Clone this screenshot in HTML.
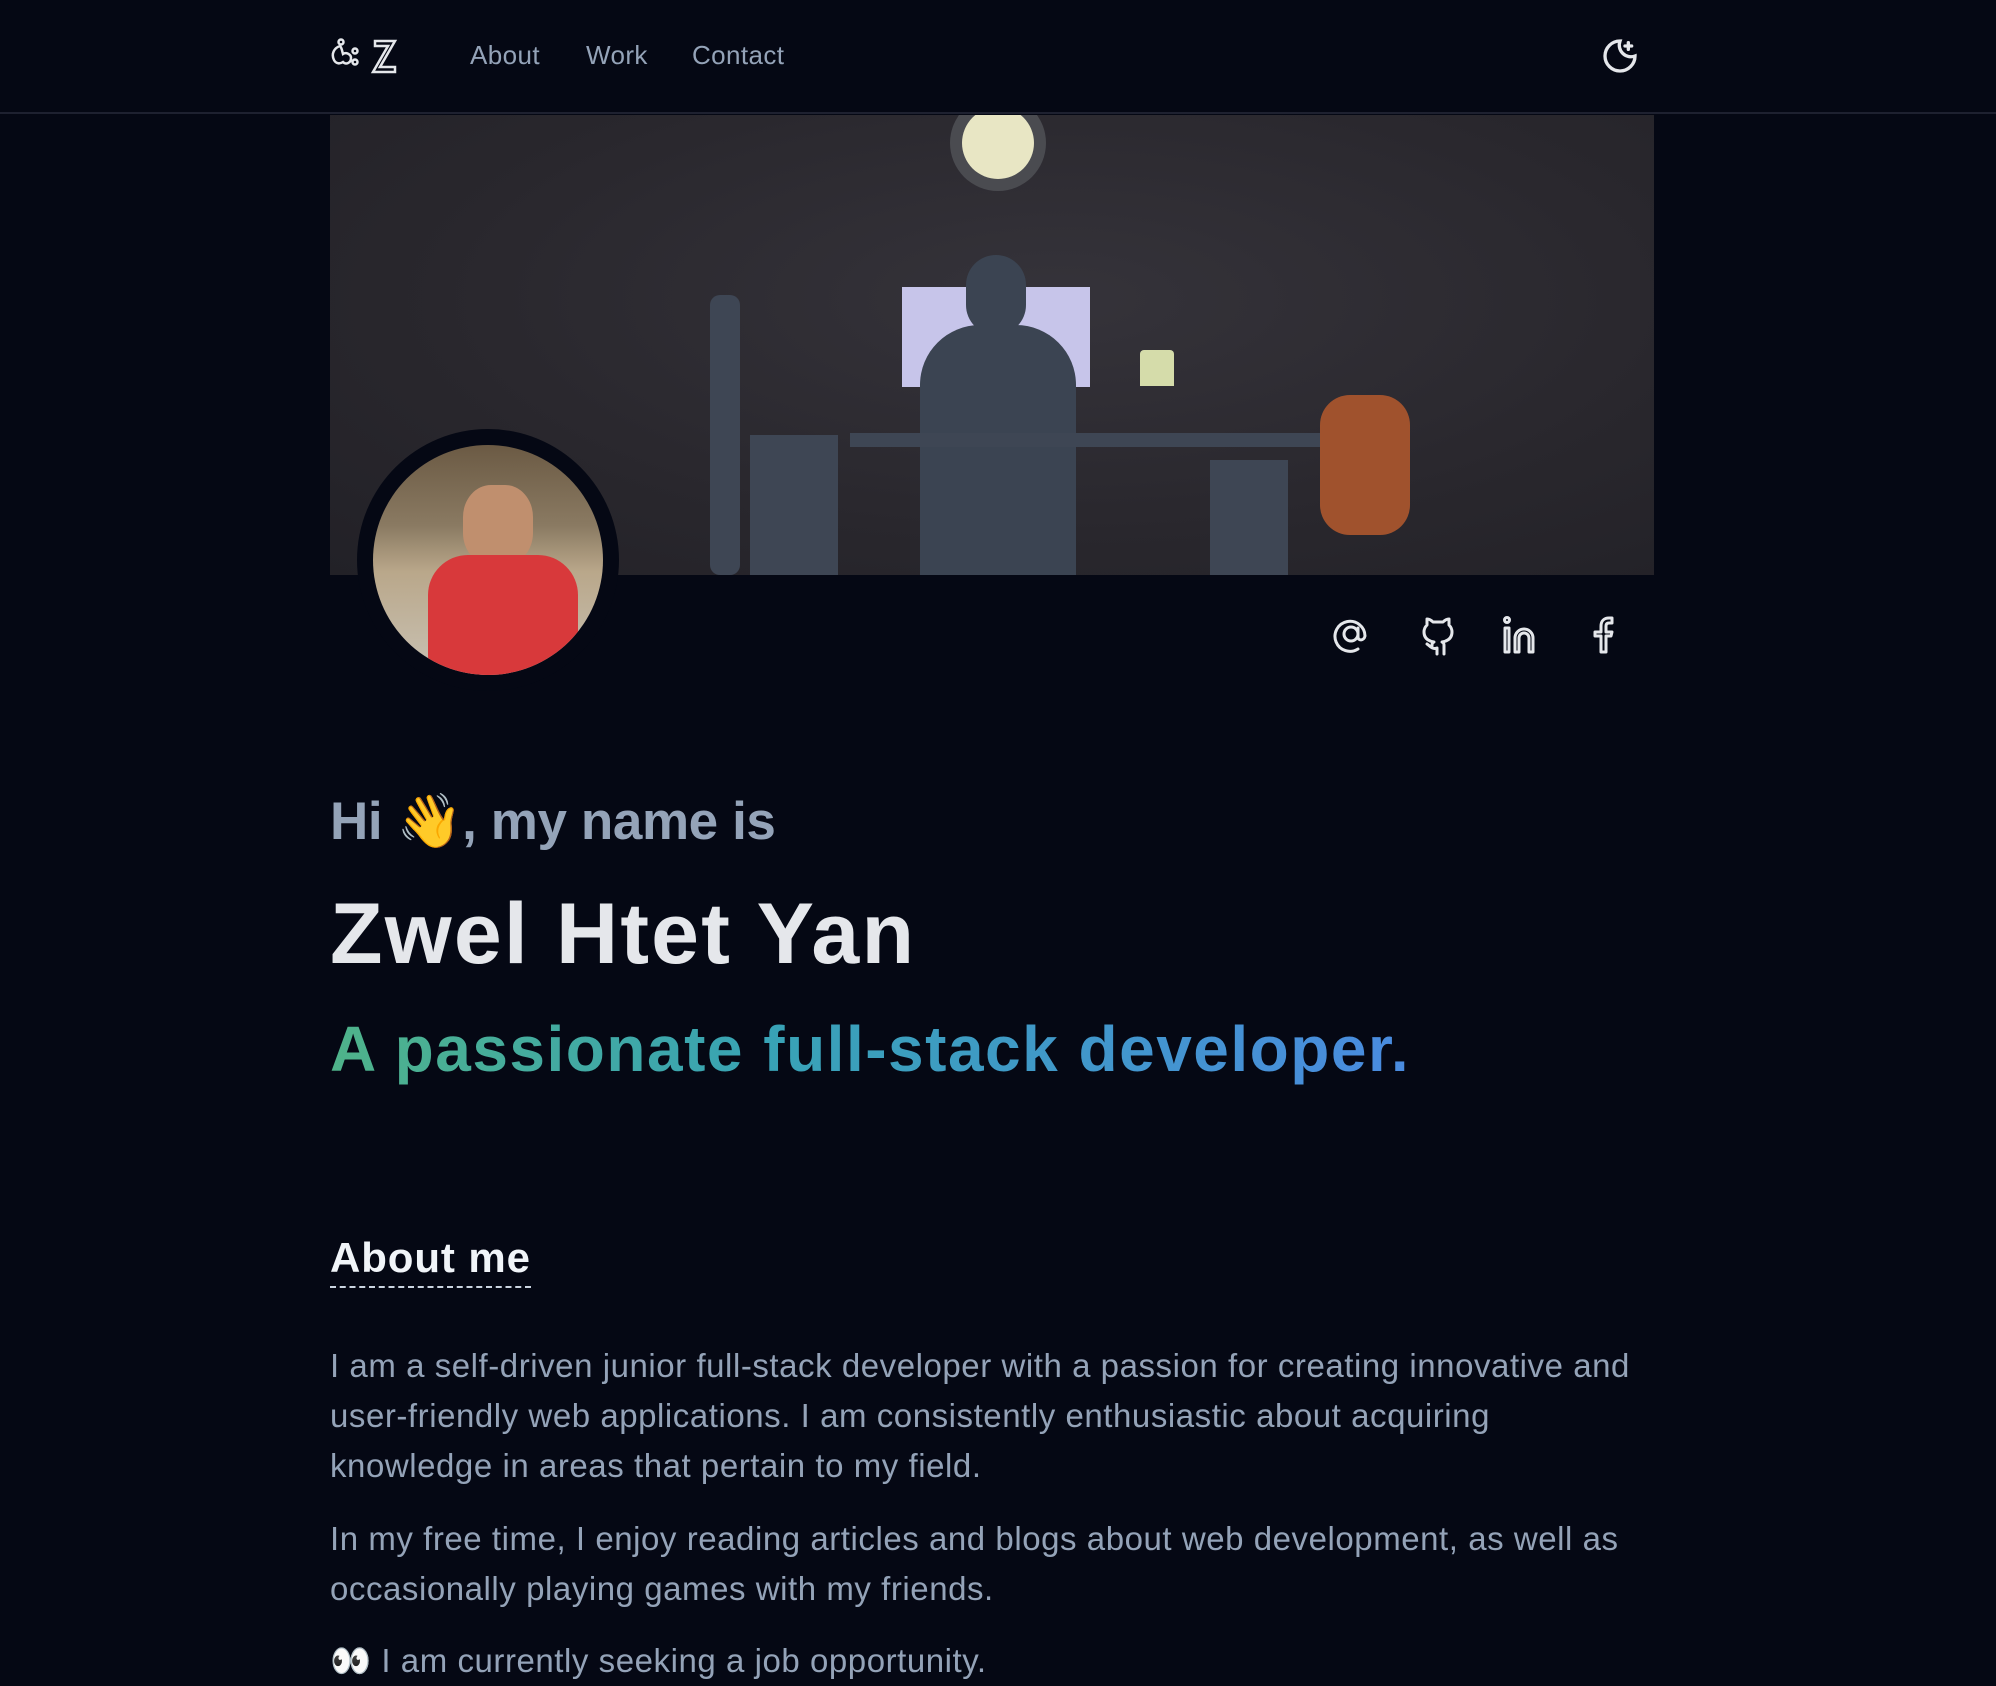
<!DOCTYPE html>
<html><head><meta charset="utf-8"><style>
*{margin:0;padding:0;box-sizing:border-box}
body{width:1996px;height:1686px;overflow:hidden;background:#050814;font-family:"Liberation Sans","DejaVu Sans",sans-serif;color:#e5e7eb}
.nav{height:114px;border-bottom:2px solid #1e2130;position:relative}
.nav a{position:absolute;top:40px;font-size:26px;color:#94a3b8;text-decoration:none;letter-spacing:0.4px}
.banner{position:absolute;left:330px;top:115px;width:1324px;height:460px;background:radial-gradient(ellipse at 55% 40%,#35333a,#29272d 60%,#222127);overflow:hidden}
.avatar{position:absolute;left:357px;top:429px;width:262px;height:262px;border-radius:50%;background:#050814}
.avatar div{position:absolute;left:16px;top:16px;width:230px;height:230px;border-radius:50%;background:linear-gradient(180deg,#6b5a44 0%,#8a7a62 35%,#b9a78a 55%,#c9c2b4 100%);overflow:hidden}
.t{position:absolute;left:330px;white-space:nowrap}
p.t{font-size:33px;letter-spacing:0.55px;color:#94a3b8;line-height:50px}
</style></head><body>
<div class="nav">
<svg style="position:absolute;left:330px;top:36px" width="70" height="40" viewBox="0 0 70 40" fill="none" stroke="#e5e7eb" stroke-width="2.5"><path d="M10 10c-6 2-9 8-6 14 2 4 6 4 9 2 3 3 8 1 8-4 0-4-5-6-8-4-1-3-1-6-3-8z"/><circle cx="11" cy="6" r="2.5"/><circle cx="25" cy="15" r="2.5"/><circle cx="25" cy="26" r="2.5"/><path d="M45 5h20l-15 26h15v5H43l15-26H45z"/></svg>
<a style="left:470px">About</a><a style="left:586px">Work</a><a style="left:692px">Contact</a>
<svg style="position:absolute;left:1600px;top:36px" width="40" height="40" viewBox="0 0 24 24" fill="none" stroke="#e5e7eb" stroke-width="2" stroke-linecap="round"><path d="M12 3a7 7 0 0 0 9 9 9 9 0 1 1-9-9z"/><path d="M17 4v4M15 6h4"/></svg>
</div>
<div class="banner">
<div style="position:absolute;left:620px;top:-20px;width:96px;height:96px;border-radius:50%;background:#4a4b50"></div>
<div style="position:absolute;left:632px;top:-8px;width:72px;height:72px;border-radius:50%;background:#e8e6c4"></div>
<div style="position:absolute;left:572px;top:172px;width:188px;height:100px;background:#c7c5ea"></div>
<div style="position:absolute;left:636px;top:140px;width:60px;height:80px;border-radius:30px;background:#3b4452"></div>
<div style="position:absolute;left:590px;top:210px;width:156px;height:250px;border-radius:60px 60px 0 0;background:#3b4452"></div>
<div style="position:absolute;left:520px;top:318px;width:470px;height:14px;background:#3e4654"></div>
<div style="position:absolute;left:420px;top:320px;width:88px;height:140px;background:#3e4654"></div>
<div style="position:absolute;left:880px;top:345px;width:78px;height:115px;background:#3e4654"></div>
<div style="position:absolute;left:380px;top:180px;width:30px;height:280px;background:#3e4654;border-radius:10px"></div>
<div style="position:absolute;left:810px;top:235px;width:34px;height:36px;background:#d5dcaa;border-radius:4px 4px 0 0"></div>
<div style="position:absolute;left:990px;top:280px;width:90px;height:140px;background:#a0522d;border-radius:30px"></div>
</div>
<div class="avatar"><div><div style="position:absolute;left:90px;top:40px;width:70px;height:80px;border-radius:40%;background:#c08f6e"></div><div style="position:absolute;left:55px;top:110px;width:150px;height:140px;border-radius:40px;background:#d8393b"></div></div></div>
<svg style="position:absolute;left:1330px;top:612px" width="340" height="44" viewBox="0 0 340 44" fill="none" stroke="#e5e7eb" stroke-width="3" stroke-linecap="round" stroke-linejoin="round">
<circle cx="21" cy="22" r="7"/><path d="M28 16v9c0 4 6 4 7-1a15 15 0 1 0-7 13"/>
<path d="M107 42v-6c-5 2-8-3-10-4M114 42v-8c0-2 0-3-2-4 6-1 10-4 10-10 0-3-1-5-3-7l0-6c-2 0-4 1-6 3h-10c-2-2-4-3-6-3v6c-2 2-3 4-3 7 0 6 4 9 10 10-2 1-2 2-2 4"/>
<circle cx="177" cy="8" r="2.5"/><path d="M175 16h4v24h-4zM185 40V26a9 9 0 0 1 18 0v14h-4V26a5 5 0 0 0-10 0v14z"/>
<path d="M271 40V24h-6v-4h6v-6c0-5 3-8 8-8h3v5h-3c-2 0-3 1-3 3v6h6l-1 4h-5v16z"/>
</svg>
<div class="t" style="top:790px;font-size:53px;font-weight:bold;color:#94a3b8;letter-spacing:-0.4px">Hi 👋, my name is</div>
<div class="t" style="top:885px;font-size:86px;font-weight:bold;color:#e5e7eb;letter-spacing:2.2px">Zwel Htet Yan</div>
<div class="t" style="top:1012px;font-size:64px;font-weight:bold;letter-spacing:1.5px;background:linear-gradient(90deg,#4fb38a,#38a3b5 40%,#4a8be0);-webkit-background-clip:text;color:transparent">A passionate full-stack developer.</div>
<div class="t" style="top:1234px;font-size:42px;font-weight:bold;color:#f1f5f9;border-bottom:2px dashed #cbd5e1;padding-bottom:4px;letter-spacing:0.9px">About me</div>
<p class="t" style="top:1341px">I am a self-driven junior full-stack developer with a passion for creating innovative and<br>user-friendly web applications. I am consistently enthusiastic about acquiring<br>knowledge in areas that pertain to my field.</p>
<p class="t" style="top:1514px">In my free time, I enjoy reading articles and blogs about web development, as well as<br>occasionally playing games with my friends.</p>
<p class="t" style="top:1636px">👀 I am currently seeking a job opportunity.</p>
</body></html>
